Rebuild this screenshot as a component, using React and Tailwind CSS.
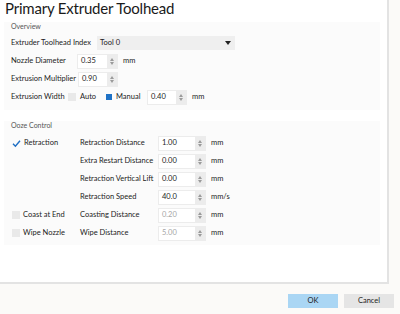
import React from "react";

const FONT = "font-['Lato','Liberation_Sans',sans-serif]";

function Spin({ value, field = "w-[36px]", disabled = false }) {
  return (
    <div className="flex h-[15px] border border-[#ececec] bg-white">
      <div
        className={`${field} flex items-center pl-[3px] text-[7.5px] ${
          disabled ? "text-[#a6a6a6]" : "text-[#1c1c1c]"
        }`}
      >
        {value}
      </div>
      <div className="flex w-[10px] flex-col items-center justify-center gap-[1px] bg-[#ececec]">
        <svg width="4" height="3" viewBox="0 0 4 3" aria-hidden="true">
          <path d="M0 3L2 0L4 3Z" fill="#9a9a9a" />
        </svg>
        <svg width="4" height="3" viewBox="0 0 4 3" aria-hidden="true">
          <path d="M0 0L2 3L4 0Z" fill="#9a9a9a" />
        </svg>
      </div>
    </div>
  );
}

function Box({ checked = false }) {
  if (checked) {
    return (
      <svg width="9" height="9" viewBox="0 0 9 9" aria-hidden="true">
        <path d="M1 4.8L3.4 7.2L8 1.8" stroke="#1f6fc4" strokeWidth="1.4" fill="none" />
      </svg>
    );
  }
  return <span className="block h-[8px] w-[8px] bg-[#e9e9e9]" />;
}

const ooze = [
  { left: { label: "Retraction", checked: true }, label: "Retraction Distance", value: "1.00", unit: "mm" },
  { label: "Extra Restart Distance", value: "0.00", unit: "mm" },
  { label: "Retraction Vertical Lift", value: "0.00", unit: "mm" },
  { label: "Retraction Speed", value: "40.0", unit: "mm/s" },
  { left: { label: "Coast at End" }, label: "Coasting Distance", value: "0.20", unit: "mm", disabled: true },
  { left: { label: "Wipe Nozzle" }, label: "Wipe Distance", value: "5.00", unit: "mm", disabled: true },
];

export default function App() {
  return (
    <div className={`flex h-[314px] w-[400px] flex-col bg-[#fbfaf8] text-[#1c1c1c] ${FONT}`}>
      <div className="h-[284px] w-[389px] border-b-2 border-r-2 border-[#e3e3e3] bg-white">
        <h1 className="ml-[5px] mt-[-3px] whitespace-nowrap text-[15px] leading-[23px] tracking-[-0.2px] text-[#1a1a1a]">
          Primary Extruder Toolhead
        </h1>

        <section className="ml-[4px] mt-[2px] w-[376px] whitespace-nowrap bg-[#fbfbfb] pb-[4px] pl-[7px]">
          <div className="h-[8px] text-[7px] leading-[8px] text-[#555]">Overview</div>
          <div className="mt-[4px] text-[7.5px]">
            <div className="flex h-[18px] items-center">
              <span className="w-[86px]">Extruder Toolhead Index</span>
              <div className="flex h-[14px] w-[138px] items-center justify-between bg-[#efefef] pl-[3px] pr-[4px]">
                <span>Tool 0</span>
                <svg width="6" height="4" viewBox="0 0 6 4" aria-hidden="true">
                  <path d="M0 0H6L3 4Z" fill="#222" />
                </svg>
              </div>
            </div>
            <div className="flex h-[18px] items-center">
              <span className="w-[66px]">Nozzle Diameter</span>
              <Spin value="0.35" field="w-[29px]" />
              <span className="ml-[5px]">mm</span>
            </div>
            <div className="flex h-[18px] items-center">
              <span className="w-[67px]">Extrusion Multiplier</span>
              <Spin value="0.90" field="w-[28px]" />
            </div>
            <div className="flex h-[18px] items-center">
              <span className="w-[57px]">Extrusion Width</span>
              <Box />
              <span className="ml-[4px] w-[25px]">Auto</span>
              <span className="flex h-[8px] w-[8px] items-center justify-center">
                <span className="block h-[6px] w-[6px] bg-[#1f72c6]" />
              </span>
              <span className="ml-[3px] w-[31px]">Manual</span>
              <Spin value="0.40" field="w-[28px]" />
              <span className="ml-[5px]">mm</span>
            </div>
          </div>
        </section>

        <section className="ml-[4px] mt-[11px] w-[376px] whitespace-nowrap bg-[#fbfbfb] pb-[3px] pl-[7px]">
          <div className="h-[8px] text-[7px] leading-[8px] text-[#555]">Ooze Control</div>
          <div className="mt-[5px] grid grid-cols-[69px_78px_auto] text-[7.5px]">
            {ooze.map((r) => (
              <React.Fragment key={r.label}>
                <div className="flex h-[18px] items-center pl-[1px]">
                  {r.left && (
                    <>
                      <Box checked={r.left.checked} />
                      <span className="ml-[3px]">{r.left.label}</span>
                    </>
                  )}
                </div>
                <div className="flex h-[18px] items-center">{r.label}</div>
                <div className="flex h-[18px] items-center">
                  <Spin value={r.value} disabled={r.disabled} />
                  <span className="ml-[5px]">{r.unit}</span>
                </div>
              </React.Fragment>
            ))}
          </div>
        </section>
      </div>

      <div className="flex justify-end gap-[6px] pr-[6px] pt-[10px] text-[7.5px]">
        <button type="button" className="h-[14px] w-[50px] bg-[#aad6f4] text-[#1c1c1c]">
          OK
        </button>
        <button type="button" className="h-[14px] w-[50px] bg-[#e5e5e5] text-[#1c1c1c]">
          Cancel
        </button>
      </div>
    </div>
  );
}
